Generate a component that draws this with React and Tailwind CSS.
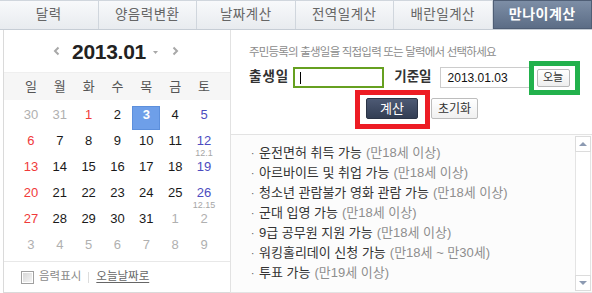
import React from "react";

const tabs = ["달력", "양음력변환", "날짜계산", "전역일계산", "배란일계산", "만나이계산"];

const rows = [
  [["30", "o"], ["31", "o"], ["1", "r"], ["2", "n"], ["3", "s"], ["4", "n"], ["5", "b"]],
  [["6", "r"], ["7", "n"], ["8", "n"], ["9", "n"], ["10", "n"], ["11", "n"], ["12", "b", "12.1"]],
  [["13", "r"], ["14", "n"], ["15", "n"], ["16", "n"], ["17", "n"], ["18", "n"], ["19", "b"]],
  [["20", "r"], ["21", "n"], ["22", "n"], ["23", "n"], ["24", "n"], ["25", "n"], ["26", "b", "12.15"]],
  [["27", "r"], ["28", "n"], ["29", "n"], ["30", "n"], ["31", "n"], ["1", "o"], ["2", "o"]],
  [["3", "o"], ["4", "o"], ["5", "o"], ["6", "o"], ["7", "o"], ["8", "o"], ["9", "o"]],
];

const colorFor = {
  o: "text-[#b0b0b0]",
  r: "text-[#f03a3a]",
  n: "text-[#1a1a1a]",
  b: "text-[#4c4cc0]",
  s: "text-white font-bold",
};

const items = [
  ["운전면허 취득 가능", "(만18세 이상)"],
  ["아르바이트 및 취업 가능", "(만18세 이상)"],
  ["청소년 관람불가 영화 관람 가능", "(만18세 이상)"],
  ["군대 입영 가능", "(만18세 이상)"],
  ["9급 공무원 지원 가능", "(만18세 이상)"],
  ["워킹홀리데이 신청 가능", "(만18세 ~ 만30세)"],
  ["투표 가능", "(만19세 이상)"],
];

function Chevron({ dir }) {
  return (
    <svg width="7" height="10" viewBox="0 0 7 10" className="block">
      <path
        d={dir === "l" ? "M5.5 1.5 L2 5 L5.5 8.5" : "M1.5 1.5 L5 5 L1.5 8.5"}
        fill="none"
        stroke="#a8a8a8"
        strokeWidth="2"
      />
    </svg>
  );
}

export default function App() {
  return (
    <div className="w-[592px] h-[293px] bg-white overflow-hidden font-['Liberation_Sans','Noto_Sans_CJK_KR',sans-serif]">
      {/* Tabs */}
      <div className="flex h-[30px] border-b border-[#c6cdd5]">
        {tabs.map((t, i) =>
          i === 5 ? (
            <div
              key={t}
              className="flex-1 flex items-center justify-center bg-linear-to-b from-[#7d8ea6] to-[#5c6d86] border border-[#4f5e75] text-white font-bold text-[14px] tracking-[0.5px]"
            >
              {t}
            </div>
          ) : (
            <div
              key={t}
              className="flex-1 flex items-center justify-center bg-linear-to-b from-[#f8f9fb] to-[#e8ebef] border-r border-t border-[#d0d6dd] text-[#666] text-[13.5px] tracking-[0.5px]"
            >
              {t}
            </div>
          )
        )}
      </div>

      {/* Body */}
      <div className="flex h-[263px]">
        {/* Left calendar */}
        <div className="ml-[3px] w-[227px] border-l border-b border-[#dadada] flex flex-col">
          <div className="h-[42px] flex items-center justify-center pr-[2px]">
            <Chevron dir="l" />
            <span className="ml-[12px] text-[21px] font-bold text-[#222] leading-none tracking-[-0.3px]">2013.01</span>
            <svg width="5" height="3" viewBox="0 0 5 3" className="ml-[7px] mt-[2px]">
              <path d="M0 0 L5 0 L2.5 3 Z" fill="#a8a8a8" />
            </svg>
            <span className="ml-[14px]">
              <Chevron dir="r" />
            </span>
          </div>
          <div className="h-[28px] bg-[#f6f6f6] border-t border-[#efefef] flex justify-center">
            <div className="grid grid-cols-7 w-[203px] pl-[1px]">
              {["일", "월", "화", "수", "목", "금", "토"].map((d) => (
                <div key={d} className="flex items-center justify-center text-[13px] text-[#555]">
                  {d}
                </div>
              ))}
            </div>
          </div>
          <div className="h-[161px] pt-[5px] flex justify-center">
            <div className="grid grid-cols-7 w-[203px] auto-rows-[26px] pl-[1px]">
              {rows.flat().map(([d, k, lunar], i) => (
                <div key={i} className="flex justify-center">
                  <div
                    className={
                      "mt-[1px] h-[24px] w-[28px] flex flex-col items-center " +
                      (k === "s" ? "bg-[#6e9fe9] border border-[#5c8fdc]" : "")
                    }
                  >
                    <span className={"text-[13px] leading-[13px] " + colorFor[k] + (k === "s" ? " mt-[1px]" : " mt-[2px]")}>
                      {d}
                    </span>
                    {lunar && <span className="text-[9px] leading-[9px] mt-[2px] text-[#a6a6a6]">{lunar}</span>}
                  </div>
                </div>
              ))}
            </div>
          </div>
          <div className="flex-1 border-t border-[#e8e8e8] flex items-center pl-[17px]">
            <div className="w-[13px] h-[13px] border border-[#a0a0a0] p-[1px] bg-white">
              <div className="w-full h-full bg-linear-to-br from-[#d8d8d8] to-[#f4f4f4]" />
            </div>
            <span className="ml-[5px] text-[11.5px] text-[#8a8a8a]">음력표시</span>
            <span className="mx-[7px] w-px h-[11px] bg-[#dddddd]" />
            <span className="text-[11.5px] text-[#666] underline underline-offset-2">오늘날짜로</span>
          </div>
        </div>

        {/* Right panel */}
        <div className="flex-1 border-l border-[#e2e2e2] flex flex-col">
          <div className="h-[104px] pl-[18px] pt-[14px]">
            <div className="text-[11.5px] leading-[16px] text-[#8c8c8c] tracking-[-0.8px]">
              주민등록의 출생일을 직접입력 또는 달력에서 선택하세요
            </div>
            <div className="mt-[7px] flex items-center h-[21px]">
              <span className="text-[13.5px] font-bold text-[#333] tracking-[1px]">출생일</span>
              <div className="ml-[4px] w-[91px] h-[21px] border-2 border-[#66a020] bg-white flex items-center pl-[5px]">
                <div className="w-px h-[12px] bg-black" />
              </div>
              <span className="ml-[10px] text-[13.5px] font-bold text-[#333]">기준일</span>
              <div className="ml-[8px] w-[93px] h-[21px] border border-[#cccccc] bg-white flex items-center pl-[7px] text-[12px] text-[#111]">
                2013.01.03
              </div>
              <div className="relative ml-[4px]">
                <div className="w-[33px] h-[18px] border border-[#b8b8b8] rounded-[2px] bg-linear-to-b from-white to-[#eeeeee] flex items-center justify-center text-[11px] text-[#333]">
                  오늘
                </div>
                <div className="absolute -left-[8px] -right-[10px] -top-[8px] -bottom-[8px] border-[5px] border-[#22b14c]" />
              </div>
            </div>
            <div className="mt-[10px] flex items-center pl-[117px]">
              <div className="relative">
                <div className="w-[52px] h-[21px] rounded-[2px] border border-[#2b3446] bg-linear-to-b from-[#4d5a74] to-[#333e54] flex items-center justify-center text-[13px] text-white">
                  계산
                </div>
                <div className="absolute -left-[11px] -right-[12px] -top-[8px] -bottom-[10px] border-[5px] border-[#ed1c24]" />
              </div>
              <div className="ml-[13px] w-[47px] h-[21px] rounded-[2px] border border-[#bdbdbd] bg-linear-to-b from-white to-[#f0f0f0] flex items-center justify-center text-[12px] text-[#333]">
                초기화
              </div>
            </div>
          </div>

          <div className="flex-1 border-t border-b border-[#e3e3e3] bg-[#fcfcfc] flex">
            <div className="flex-1 pt-[8px] pl-[20px]">
              {items.map(([a, b]) => (
                <div key={a} className="flex items-center h-[20px] text-[13px]">
                  <span className="w-[8px] text-[#555] text-[10px]">·</span>
                  <span className="text-[#333]">{a}</span>
                  <span className="ml-[4px] text-[#8e8e8e]">{b}</span>
                </div>
              ))}
            </div>
            <div className="w-[17px] pr-[1px] py-[1px] flex flex-col">
              <div className="h-[16px] border border-[#dcdcdc] bg-white flex items-center justify-center">
                <svg width="8" height="4" viewBox="0 0 8 4">
                  <path d="M0 4 L4 0 L8 4 Z" fill="#8c9ab2" />
                </svg>
              </div>
              <div className="flex-1 border-x border-[#e4e4e4] bg-white" />
              <div className="h-[16px] border border-[#dcdcdc] bg-white flex items-center justify-center">
                <svg width="8" height="4" viewBox="0 0 8 4">
                  <path d="M0 0 L8 0 L4 4 Z" fill="#8c9ab2" />
                </svg>
              </div>
            </div>
          </div>
        </div>
      </div>
    </div>
  );
}
